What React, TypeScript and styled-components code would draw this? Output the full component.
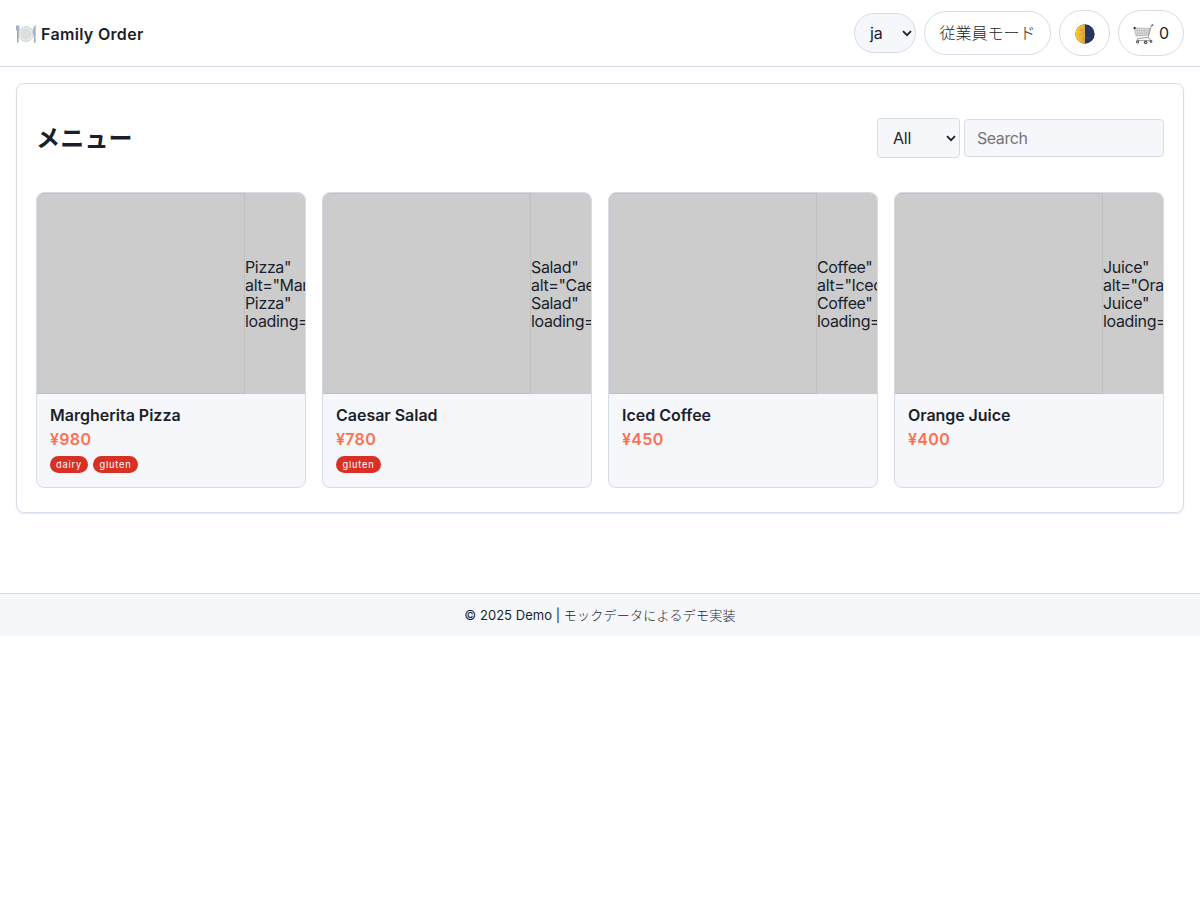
import React from "react";
import styled, { createGlobalStyle } from "styled-components";

const GlobalStyle = createGlobalStyle`
  *, *::before, *::after { box-sizing: border-box; }
  body {
    margin: 0;
    background: #fff;
    color: #1a1f2b;
    font-family: Inter, "Noto Sans CJK JP", sans-serif;
    font-size: 16px;
    line-height: 18px;
  }
`;

const Header = styled.header`
  height: 67px;
  padding: 0 16px;
  display: flex;
  align-items: center;
  justify-content: space-between;
  border-bottom: 1px solid #d5dce6;
`;

const Brand = styled.div`
  display: flex;
  align-items: center;
  gap: 5px;
  padding-top: 2px;
  font-weight: 600;
  white-space: nowrap;
  svg { display: block; }
`;

const Fit = styled.span<{ $spacing?: number }>`
  letter-spacing: ${(p) => p.$spacing ?? 0}px;
  white-space: nowrap;
`;

const Actions = styled.div`
  display: flex;
  align-items: center;
  gap: 8px;
`;

const PillButton = styled.button<{ $width: number; $height: number }>`
  width: ${(p) => p.$width}px;
  height: ${(p) => p.$height}px;
  padding: 0;
  display: flex;
  align-items: center;
  justify-content: center;
  gap: 5px;
  border: 1px solid #d5dce6;
  border-radius: 999px;
  background: #fff;
  color: inherit;
  font: inherit;
  font-weight: 300;
  svg { display: block; margin-top: 2px; }
`;

const CartCount = styled.span`
  font-weight: 400;
`;

const SelectBox = styled.div<{ $width: number; $round?: boolean }>`
  width: ${(p) => p.$width}px;
  height: 40px;
  padding: 0 2px 0 15px;
  display: flex;
  align-items: center;
  justify-content: space-between;
  border: 1px solid #d5dce6;
  border-radius: ${(p) => (p.$round ? "999px" : "4px")};
  background: #f5f7fb;
  letter-spacing: -0.2px;
`;

const Panel = styled.main`
  margin: 16px 16px 80px;
  height: 430px;
  padding: 34px 19px 0;
  border: 1px solid #d5dce6;
  border-radius: 8px;
  box-shadow: 0 1px 2px rgba(20, 40, 80, 0.1);
`;

const PanelHead = styled.div`
  height: 40px;
  display: flex;
  align-items: center;
  justify-content: space-between;
`;

const Title = styled.h2`
  margin: 0;
  padding-top: 1px;
  font-size: 24px;
  line-height: 28px;
  font-weight: 700;
  letter-spacing: 0.2px;
`;

const Filters = styled.div`
  display: flex;
  align-items: center;
  gap: 4px;
`;

const SearchInput = styled.input`
  width: 200px;
  height: 38px;
  padding: 0 12px;
  border: 1px solid #d5dce6;
  border-radius: 4px;
  background: #f5f7fb;
  color: inherit;
  font: inherit;
  letter-spacing: -0.45px;
  outline: none;
  &::placeholder { color: #757575; opacity: 1; }
`;

const Grid = styled.div`
  margin-top: 34px;
  display: grid;
  grid-template-columns: repeat(4, 1fr);
  gap: 16px;
`;

const Card = styled.article`
  min-width: 0;
  height: 296px;
  overflow: hidden;
  border: 1px solid #d5dce6;
  border-radius: 8px;
  background: #f5f7fb;
`;

const Media = styled.div`
  height: 201px;
  display: flex;
  align-items: center;
  overflow: hidden;
  background: #ccc;
`;

const EmptyImage = styled.div`
  flex: 0 0 208px;
  height: 100%;
  border: 1px solid #c0c0c0;
  border-left-color: #c8c8c8;
`;

const Markup = styled.div`
  flex: none;
  white-space: pre;
  letter-spacing: -0.35px;
`;

const CardBody = styled.div`
  padding: 12px 13px;
`;

const Name = styled.div`
  font-weight: 600;
`;

const Price = styled.div`
  margin-top: 6px;
  color: #ff6f4f;
  font-weight: 600;
`;

const Tags = styled.div`
  margin-top: 8px;
  display: flex;
  gap: 5px;
`;

const Tag = styled.span<{ $width: number }>`
  width: ${(p) => p.$width}px;
  height: 17px;
  display: flex;
  align-items: center;
  justify-content: center;
  border-radius: 9px;
  background: #d93026;
  color: #fff;
  font-size: 9.2px;
  line-height: 17px;
  letter-spacing: 0.85px;
`;

const Footer = styled.footer`
  height: 43px;
  display: flex;
  align-items: center;
  justify-content: center;
  padding-bottom: 1px;
  border-top: 1px solid #d5dce6;
  background: #f5f7fb;
  font-size: 13px;
`;

const FooterNote = styled.span`
  font-weight: 300;
  letter-spacing: 0.25px;
`;

const Chevron = () => (
  <svg width="12" height="12" viewBox="0 0 12 12" fill="none">
    <path d="M2 4.2 6 8.2 10 4.2" stroke="#1a1f2b" strokeWidth="1.8" />
  </svg>
);

const PlateIcon = () => (
  <svg width="20" height="18" viewBox="0 0 20 18" fill="none">
    <circle cx="10" cy="9" r="7.4" fill="#eceded" stroke="#c2c5c7" strokeWidth="0.8" />
    <circle cx="10" cy="9" r="5" fill="#dddede" stroke="#cfd1d2" strokeWidth="0.6" />
    <path d="M.7 .5v4.3q0 1 1.1 1t1.1-1V.5M1.8.5v8" stroke="#8394a5" strokeWidth="0.9" />
    <path d="M1.8 6.5v11" stroke="#97a5b2" strokeWidth="1.6" />
    <path d="M19.3.5q-2.2 2-2.1 8.7h1.1v8.3h1z" fill="#a9b8c6" stroke="#8b9cab" strokeWidth="0.5" />
  </svg>
);

const MoonIcon = () => (
  <svg width="20" height="20" viewBox="0 0 20 20">
    <defs>
      <linearGradient id="moon-light" x1="0" y1="0" x2="1" y2="0.2">
        <stop offset="0" stopColor="#ffd321" />
        <stop offset="0.5" stopColor="#f5bd2e" />
        <stop offset="1" stopColor="#d9a548" />
      </linearGradient>
    </defs>
    <circle cx="10" cy="10" r="9.7" fill="#24365a" />
    <path d="M10 .3a9.7 9.7 0 0 0 0 19.4z" fill="url(#moon-light)" />
    <g fill="#b98d38" opacity="0.5">
      <circle cx="6.3" cy="5.8" r="1.5" />
      <circle cx="8.4" cy="9.3" r="1" />
      <circle cx="5" cy="10.6" r="0.9" />
      <circle cx="8" cy="14.6" r="1" />
    </g>
    <path d="M11 13.5q2 1.7 4 .3M13 5q2 0 3 1.5" stroke="#34466a" strokeWidth="1.1" fill="none" />
  </svg>
);

const CartIcon = () => (
  <svg width="21" height="21" viewBox="0 0 21 21" fill="none">
    <path d="M1 3.8 17 4.5 15 11.2 3.2 12z" fill="#e2e2e2" stroke="#9a9a9a" strokeWidth="0.6" />
    <path d="m3.8 4 1 8M6.3 4l.7 7.8M8.8 4.2l.3 7.5M11.4 4.3l-.2 7.2M14.2 4.5l-1 6.8M1.7 6.5l14.5.2M2.4 9.2l13.3-.1" stroke="#aaa" strokeWidth="0.5" />
    <path d="M20 .8 18.2 2 15.2 13.2 17.8 16.6H4L4.8 14.5l10.2-1" stroke="#808080" strokeWidth="0.8" />
    <circle cx="1.6" cy="4.1" r="1.1" fill="#222" />
    <path d="m18.5 1.8 1.5-1" stroke="#444" strokeWidth="1.3" />
    <circle cx="4.6" cy="17.8" r="1.6" fill="#555" />
    <circle cx="12.6" cy="18.4" r="1.8" fill="#555" />
    <circle cx="18" cy="17.5" r="1.4" fill="#666" />
    <circle cx="4.6" cy="17.8" r=".6" fill="#ccc" />
    <circle cx="12.6" cy="18.4" r=".7" fill="#ccc" />
  </svg>
);

type Item = { name: string; price: string; tags: string[]; spacing: number };

const items: Item[] = [
  { name: "Margherita Pizza", price: "¥980", tags: ["dairy", "gluten"], spacing: 0 },
  { name: "Caesar Salad", price: "¥780", tags: ["gluten"], spacing: -0.02 },
  { name: "Iced Coffee", price: "¥450", tags: [], spacing: 0 },
  { name: "Orange Juice", price: "¥400", tags: [], spacing: -0.06 },
];

const tagWidths: Record<string, number> = { dairy: 38, gluten: 45 };

const MenuCard = ({ item }: { item: Item }) => {
  const word = item.name.split(" ")[1];
  return (
    <Card>
      <Media>
        <EmptyImage />
        <Markup>{`${word}"\nalt="${item.name.split(" ")[0]}\n${word}"\nloading="lazy">`}</Markup>
      </Media>
      <CardBody>
        <Name><Fit $spacing={item.spacing}>{item.name}</Fit></Name>
        <Price><Fit $spacing={0.3}>{item.price}</Fit></Price>
        <Tags>
          {item.tags.map((tag) => (
            <Tag key={tag} $width={tagWidths[tag]}>{tag}</Tag>
          ))}
        </Tags>
      </CardBody>
    </Card>
  );
};

export default function App() {
  return (
    <>
      <GlobalStyle />
      <Header>
        <Brand>
          <PlateIcon />
          <Fit $spacing={0.32}>Family Order</Fit>
        </Brand>
        <Actions>
          <SelectBox $width={62} $round>
            <span>ja</span>
            <Chevron />
          </SelectBox>
          <PillButton $width={127} $height={44}>従業員モード</PillButton>
          <PillButton $width={51} $height={46}><MoonIcon /></PillButton>
          <PillButton $width={66} $height={46}>
            <CartIcon />
            <CartCount>0</CartCount>
          </PillButton>
        </Actions>
      </Header>
      <Panel>
        <PanelHead>
          <Title>メニュー</Title>
          <Filters>
            <SelectBox $width={83}>
              <span>All</span>
              <Chevron />
            </SelectBox>
            <SearchInput placeholder="Search" />
          </Filters>
        </PanelHead>
        <Grid>
          {items.map((item) => <MenuCard key={item.name} item={item} />)}
        </Grid>
      </Panel>
      <Footer>
        <Fit $spacing={0.04}>© 2025 Demo |&nbsp;</Fit>
        <FooterNote>モックデータによるデモ実装</FooterNote>
      </Footer>
    </>
  );
}
